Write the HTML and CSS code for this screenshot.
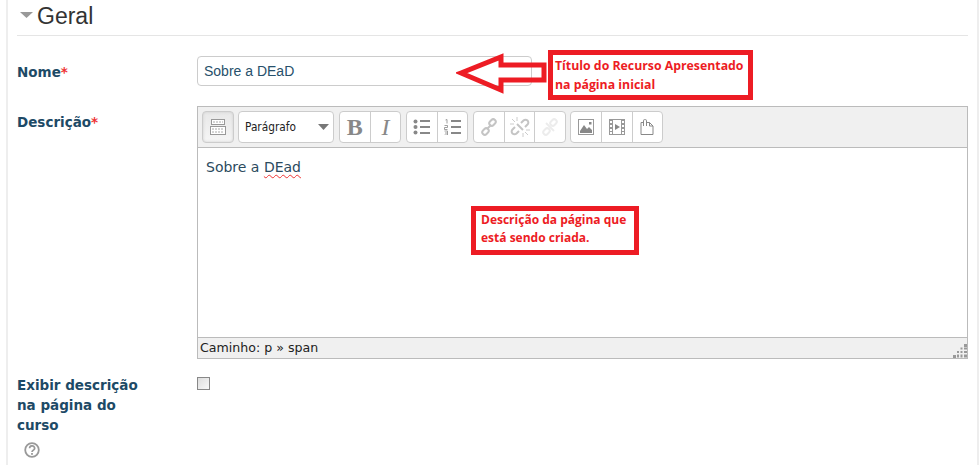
FILE: index.html
```html
<!DOCTYPE html>
<html lang="pt">
<head>
<meta charset="utf-8">
<title>Geral</title>
<link rel="stylesheet" href="styles.css">
</head>
<body>
<main class="page">
  <div class="legend">
    <svg class="caret" width="13" height="6" viewBox="0 0 13 6"><path d="M0 0h13L6.500 6z" fill="#999"/></svg>
    <span>Geral</span>
  </div>
  <div class="row row-name">
    <div class="label">Nome<span class="req">*</span></div>
    <input class="text-input" type="text" value="Sobre a DEaD">
  </div>
  <div class="row row-desc">
    <div class="label">Descrição<span class="req">*</span></div>
    <div class="editor">
      <div class="toolbar">
        <div class="btn-single"><svg width="16" height="16" viewBox="0 0 16 16"><g fill="#fff" stroke="#999"><rect x="1.500" y=".5" width="13" height="5"/><rect x=".5" y="7.500" width="15" height="8"/></g><path d="M3 3h10M2 10h12M2 13h12" stroke="#aaa" stroke-dasharray="2 1"/></svg></div>
        <div class="select"><span>Parágrafo</span><svg width="11" height="6" viewBox="0 0 11 6"><path d="M0 0h11L5.500 6z" fill="#777"/></svg></div>
        <div class="group">
          <div class="btn bold">B</div>
          <div class="btn italic">I</div>
        </div>
        <div class="group">
          <div class="btn"><svg width="18" height="16" viewBox="0 0 18 16"><g fill="#888"><circle cx="2.500" cy="2.500" r="2"/><circle cx="2.500" cy="8" r="2"/><circle cx="2.500" cy="13.500" r="2"/><rect x="7" y="1" width="10" height="2"/><rect x="7" y="7" width="10" height="2"/><rect x="7" y="13" width="10" height="2"/></g></svg></div>
          <div class="btn"><svg width="18" height="16" viewBox="0 0 18 16"><g fill="#888"><rect x="7" y="1" width="10" height="2"/><rect x="7" y="7" width="10" height="2"/><rect x="7" y="13" width="10" height="2"/></g><path d="M1.500 1 3 .5V4.500M.5 6.500h3V8.500h-3V10.500h3M.5 12h3v4h-3M1 14h2.500" fill="none" stroke="#888" stroke-width=".8"/></svg></div>
        </div>
        <div class="group">
          <div class="btn"><svg width="18" height="18" viewBox="0 0 18 18"><g fill="none" stroke="#c4c4c4" stroke-width="2"><rect x="9" y="2" width="7" height="5" rx="2.500" transform="rotate(-45 12.500 4.500)"/><rect x="2" y="11" width="7" height="5" rx="2.500" transform="rotate(-45 5.500 13.500)"/><path d="M7 11l4-4"/></g></svg></div>
          <div class="btn"><svg width="20" height="20" viewBox="0 0 20 20"><g fill="none" stroke="#c4c4c4" stroke-width="2"><path d="M11 6l2.500-2.500a2.800 2.800 0 0 1 4 4L15 10"/><path d="M9 14l-2.500 2.500a2.800 2.800 0 0 1-4-4L5 10"/><path d="M7 7l6 6"/></g><path d="M7 0v4M0 7h4M13 16v4M16 13h4M2 2l3 3M15 15l3 3" stroke="#ccc"/></svg></div>
          <div class="btn"><svg width="18" height="18" viewBox="0 0 18 18"><g fill="none" stroke="#ececec" stroke-width="2"><rect x="9" y="2" width="7" height="5" rx="2.500" transform="rotate(-45 12.500 4.500)"/><rect x="2" y="11" width="7" height="5" rx="2.500" transform="rotate(-45 5.500 13.500)"/><path d="M5 5l8 8"/></g></svg></div>
        </div>
        <div class="group">
          <div class="btn"><svg width="16" height="16" viewBox="0 0 16 16"><rect x=".5" y=".5" width="15" height="15" fill="#fff" stroke="#999"/><path d="M2 14V12L6 6l3 4 2-2 3 3v3z" fill="#888"/><rect x="11" y="3" width="2.500" height="2.500" fill="#888"/></svg></div>
          <div class="btn"><svg width="16" height="16" viewBox="0 0 16 16"><path d="M0 0h16v16H0z" fill="#999"/><path d="M4 1h8v14H4z" fill="#fff"/><path d="M1 2h2v2H1zM1 6h2v2H1zM1 10h2v2H1zM1 13h2v2H1zM13 2h2v2h-2zM13 6h2v2h-2zM13 10h2v2h-2zM13 13h2v2h-2z" fill="#fff"/><path d="M6 5l5 3-5 3z" fill="#888"/></svg></div>
          <div class="btn"><svg width="14" height="16" viewBox="0 0 14 16"><path d="M3 3.500H1V15.500H13V7L9.500 3.500H7" fill="none" stroke="#888"/><path d="M3.500 7V1.500a.8.800 0 0 1 .8-.8h1.400a.8.800 0 0 1 .8.800V7" fill="none" stroke="#888"/><path d="M9.500 3.500V7H13" fill="none" stroke="#888"/></svg></div>
        </div>
      </div>
      <div class="content"><span>Sobre a <span class="spell">DEad</span></span></div>
      <div class="status"><span class="path">Caminho: p » span</span><svg class="grip" width="14" height="14" viewBox="0 0 14 14"><path d="M11 0h3v3h-3zM7.500 3.500h2v2h-2zM11 3.500h3v2h-3zM7.500 7h2v2h-2zM4 7h2v2H4zM11 7h3v2h-3zM0 11h3v3H0zM4 10.500h2v3H4zM7.500 10.500h2v3h-2zM11 10.500h3v3h-3z" fill="#999"/></svg></div>
    </div>
  </div>
  <div class="row row-check">
    <div class="label label-wide">Exibir descrição na página do curso
      <svg class="help" width="16" height="16" viewBox="0 0 16 16"><circle cx="8" cy="8" r="6.800" fill="#fff" stroke="#999" stroke-width="1.800"/><path d="M5.600 6.200a2.500 2.300 0 1 1 3.700 2C8.500 8.700 8 9 8 10" fill="none" stroke="#999" stroke-width="1.700"/><rect x="7.100" y="11" width="1.800" height="1.800" fill="#999"/></svg>
    </div>
    <span class="check"></span>
  </div>

  <svg class="arrow" width="100" height="50" viewBox="0 0 100 50"><path d="M5 25 45 9v8h43v15H45v10z" fill="none" stroke="#ed1c24" stroke-width="5"/></svg>
  <div class="note note-title">Título do Recurso Apresentado<br>na página inicial</div>
  <div class="note note-desc">Descrição da página que<br>está sendo criada.</div>
</main>
</body>
</html>
```
FILE: styles.css
```css
html, body {
  margin: 0;
  height: 465px;
  overflow: hidden;
  background: #fff;
}
.page {
  position: relative;
  box-sizing: border-box;
  width: 973px;
  height: 465px;
  margin-left: 6px;
  padding: 0 9px;
  border-left: 2px solid #eee;
  border-right: 2px solid #eee;
  font-family: "DejaVu Sans", sans-serif;
  color: #333;
}
.legend {
  display: flex;
  align-items: flex-start;
  gap: 4px;
  height: 35px;
  padding-left: 3px;
  border-bottom: 1px solid #e5e5e5;
  font: 23px/32px "Liberation Sans", sans-serif;
  color: #333;
}
.caret { margin-top: 12px; }
.row {
  display: grid;
  grid-template-columns: 180px 771px;
  align-items: start;
}
.row-name { margin-top: 20px; }
.row-desc { margin-top: 20px; }
.row-check { margin-top: 16px; }
.label {
  font-weight: bold;
  font-size: 13.500px;
  line-height: 20px;
  color: #1d4a66;
  padding-top: 6px;
}
.label-wide { width: 125px; padding-top: 0; }
.req { color: #e33; }
.text-input {
  box-sizing: border-box;
  width: 335px;
  height: 30px;
  padding: 0 6px;
  border: 1px solid #ccc;
  border-radius: 4px;
  font: 14px "Liberation Sans", sans-serif;
  color: #27506b;
  background: #fff;
}
.editor {
  box-sizing: border-box;
  width: 771px;
  height: 253px;
  border: 1px solid #bbb;
  display: flex;
  flex-direction: column;
}
.toolbar {
  box-sizing: border-box;
  display: flex;
  align-items: center;
  gap: 4px;
  height: 41px;
  padding: 0 4px;
  background: #f0f0f0;
  border-bottom: 1px solid #bbb;
}
.btn-single, .select, .group {
  box-sizing: border-box;
  height: 32px;
  border: 1px solid #ccc;
  border-radius: 4px;
  background: #fff;
}
.btn-single {
  display: flex;
  align-items: center;
  justify-content: center;
  width: 32px;
  background: linear-gradient(#e8e8e8, #f6f6f6);
  box-shadow: inset 0 0 3px #ccc;
}
.select {
  display: flex;
  align-items: center;
  justify-content: space-between;
  width: 96px;
  padding: 0 4px 0 6px;
  font: 12px "DejaVu Sans", sans-serif;
  color: #222;
}
.select span { transform: scaleX(.88); transform-origin: left; }
.group { display: flex; margin-left: .5px; }
.btn {
  box-sizing: border-box;
  display: flex;
  align-items: center;
  justify-content: center;
  width: 30.300px;
  height: 30px;
  color: #888;
  font: 24px "Liberation Serif", serif;
}
.btn + .btn { border-left: 1px solid #ccc; }
.bold { font-weight: bold; }
.italic { font-style: italic; }
.content {
  flex: 1;
  box-sizing: border-box;
  padding: 9px 8px;
  font-size: 14px;
  line-height: 20px;
  color: #2b4a5e;
}
.spell {
  text-decoration: underline wavy #e33 1px;
  text-underline-offset: 2px;
}
.status {
  box-sizing: border-box;
  display: flex;
  justify-content: space-between;
  align-items: flex-end;
  height: 21px;
  padding-left: 2px;
  background: #f0f0f0;
  border-top: 1px solid #bbb;
  font-size: 12.600px;
  line-height: 21px;
  color: #222;
}
.path { padding-top: 1px; }
.check {
  display: block;
  box-sizing: border-box;
  width: 13px;
  height: 13px;
  margin-top: 2px;
  border: 1px solid #888;
  background: linear-gradient(135deg, #ddd, #f8f8f8);
}
.help { display: block; margin: 7px 0 0 7px; }
.arrow { position: absolute; left: 448px; top: 48px; }
.note {
  position: absolute;
  box-sizing: border-box;
  border: 5px solid #ed1c24;
  padding: 0 0 0 2px;
  font: bold 12.300px/19px "Open Sans", sans-serif;
  color: #ed1c24;
  background: #fff;
  white-space: nowrap;
}
.note-title { left: 540px; top: 50px; width: 205px; height: 50px; padding-top: 1px; }
.note-desc { left: 463px; top: 206px; width: 168px; height: 49px; padding: 0 0 0 5px; font-size: 12px; line-height: 18px; }
```
